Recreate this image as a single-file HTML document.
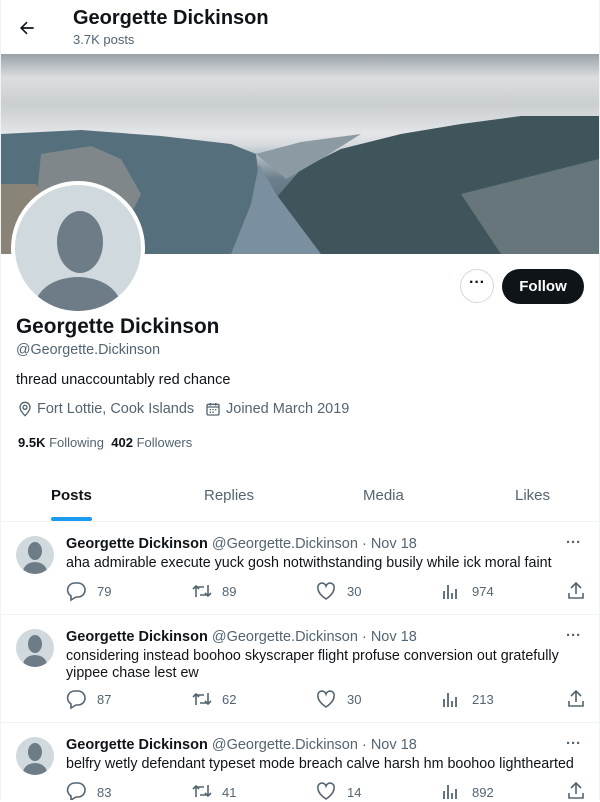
<!DOCTYPE html>
<html><head><meta charset="utf-8"><style>
*{box-sizing:border-box;margin:0;padding:0}
body{width:600px;height:800px;overflow:hidden;background:#fff;font-family:"Liberation Sans",sans-serif;color:#0f1419;position:relative}
.abs{position:absolute}
.g{color:#536471}
.tab{position:absolute;top:487px;font-size:15px;color:#536471}
.tw{position:absolute;left:0;width:600px;border-top:1px solid #eff3f4}
.av{position:absolute;left:16px;width:38px;height:38px;border-radius:50%;background:#cfd9de;overflow:hidden}
.av:before{content:"";position:absolute;left:12px;top:6px;width:14px;height:18px;border-radius:50%;background:#6e7c87}
.av:after{content:"";position:absolute;left:7px;top:26px;width:24px;height:20px;border-radius:50% 50% 0 0;background:#6e7c87}
.nm{position:absolute;left:66px;font-size:14.5px;white-space:nowrap}
.nm b{color:#0f1419}
.tx{position:absolute;left:66px;font-size:14.3px;line-height:17px;width:525px}
.act{position:absolute;font-size:13px;color:#536471}
svg{display:block}
</style></head><body>
<div class="abs" style="left:0;top:0;width:1px;height:800px;background:#eff3f4"></div>
<div class="abs" style="right:0;top:0;width:1px;height:800px;background:#eff3f4"></div>
<svg class="abs" style="left:17px;top:18px" width="20" height="20" viewBox="0 0 24 24"><path d="M20 11H7.4l5.3-5.3-1.4-1.4L3.6 12l7.7 7.7 1.4-1.4L7.4 13H20z" fill="#0f1419"/></svg>
<div class="abs" style="left:73px;top:7px;font-size:20px;font-weight:bold">Georgette Dickinson</div>
<div class="abs g" style="left:73px;top:32px;font-size:13px">3.7K posts</div>
<div class="abs" style="left:1px;top:54px;width:598px;height:200px;overflow:hidden;background:linear-gradient(180deg,#9aa2a8 0%,#dcdfe1 12%,#c9ced1 25%,#e4e6e8 40%,#d8dcdf 45%,#b9c2c8 50%,#6d808e 62%,#546a75 80%,#5f6f74 100%)">
<svg width="598" height="200" viewBox="0 0 598 200">
<path d="M0 80 L80 76 L160 82 L230 90 L255 100 L260 140 L280 200 L0 200Z" fill="#55707c"/>
<path d="M40 100 L90 92 L120 105 L140 140 L125 170 L100 200 L30 200Z" fill="#7f878b"/>
<path d="M0 130 L35 130 L50 155 L35 200 L0 200Z" fill="#8a8478"/>
<path d="M270 150 L300 115 L340 95 L400 80 L460 70 L520 62 L598 62 L598 200 L320 200Z" fill="#3f555b"/>
<path d="M255 100 L300 88 L360 80 L320 105 L285 125Z" fill="#8c9aa3"/>
<path d="M230 200 L250 150 L258 110 L275 140 L320 200Z" fill="#7a8fa0"/>
<path d="M460 140 L598 105 L598 200 L500 200Z" fill="#67767a"/>
</svg></div>
<div class="abs" style="left:11px;top:181px;width:134px;height:134px;border-radius:50%;background:#cfd9de;border:4px solid #fff;overflow:hidden">
<div class="abs" style="left:42px;top:26px;width:46px;height:62px;border-radius:50%;background:#6e7c87"></div>
<div class="abs" style="left:20px;top:92px;width:86px;height:60px;border-radius:50% 50% 0 0;background:#6e7c87"></div>
</div>
<div class="abs" style="left:460px;top:269px;width:34px;height:34px;border-radius:50%;border:1px solid #cfd9de;text-align:center;font-size:16px;line-height:26px;font-weight:bold">···</div>
<div class="abs" style="left:502px;top:269px;width:82px;height:35px;border-radius:18px;background:#0f1419;color:#fff;font-size:15px;font-weight:bold;text-align:center;line-height:35px">Follow</div>
<div class="abs" style="left:16px;top:315px;font-size:20.8px;font-weight:bold">Georgette Dickinson</div>
<div class="abs g" style="left:16px;top:342px;font-size:14.3px">@Georgette.Dickinson</div>
<div class="abs" style="left:16px;top:372px;font-size:14.5px">thread unaccountably red chance</div>
<svg class="abs" style="left:17px;top:401px" width="16" height="16" viewBox="0 0 24 24"><path d="M12 2a7.5 7.5 0 0 0-7.5 7.5C4.5 15 12 22 12 22s7.5-7 7.5-12.5A7.5 7.5 0 0 0 12 2zm0 10.5a3 3 0 1 1 0-6 3 3 0 0 1 0 6z" fill="none" stroke="#536471" stroke-width="2"/></svg>
<div class="abs g" style="left:37px;top:401px;font-size:14.5px">Fort Lottie, Cook Islands</div>
<svg class="abs" style="left:205px;top:401px" width="16" height="16" viewBox="0 0 24 24"><rect x="3" y="5" width="18" height="16" rx="2" fill="none" stroke="#536471" stroke-width="2"/><path d="M3 9h18M8 3v4M16 3v4" stroke="#536471" stroke-width="2"/><path d="M7 12h2v2H7zM11 12h2v2h-2zM15 12h2v2h-2zM7 16h2v2H7zM11 16h2v2h-2z" fill="#536471"/></svg>
<div class="abs g" style="left:226px;top:401px;font-size:14.5px">Joined March 2019</div>
<div class="abs" style="left:18px;top:435px;font-size:13px"><b>9.5K</b> <span class="g">Following</span> &nbsp;<b>402</b> <span class="g">Followers</span></div>
<div class="tab" style="left:51px;color:#0f1419;font-weight:bold">Posts</div>
<div class="tab" style="left:204px">Replies</div>
<div class="tab" style="left:363px">Media</div>
<div class="tab" style="left:515px">Likes</div>
<div class="abs" style="left:51px;top:517px;width:41px;height:4px;border-radius:2px;background:#1d9bf0"></div>

<div class="tw" style="top:521px;height:93px">
<div class="av" style="top:14px"></div>
<div class="nm" style="top:14px"><b>Georgette Dickinson</b> <span class="g">@Georgette.Dickinson · Nov 18</span></div>
<div class="abs g" style="left:566px;top:12px;font-size:15px;font-weight:bold">···</div>
<div class="tx" style="top:33px">aha admirable execute yuck gosh notwithstanding busily while ick moral faint</div>
</div>
<div class="tw" style="top:614px;height:108px">
<div class="av" style="top:14px"></div>
<div class="nm" style="top:14px"><b>Georgette Dickinson</b> <span class="g">@Georgette.Dickinson · Nov 18</span></div>
<div class="abs g" style="left:566px;top:12px;font-size:15px;font-weight:bold">···</div>
<div class="tx" style="top:33px">considering instead boohoo skyscraper flight profuse conversion out gratefully yippee chase lest ew</div>
</div>
<div class="tw" style="top:722px;height:80px">
<div class="av" style="top:14px"></div>
<div class="nm" style="top:14px"><b>Georgette Dickinson</b> <span class="g">@Georgette.Dickinson · Nov 18</span></div>
<div class="abs g" style="left:566px;top:12px;font-size:15px;font-weight:bold">···</div>
<div class="tx" style="top:33px;white-space:nowrap;width:auto">belfry wetly defendant typeset mode breach calve harsh hm boohoo lighthearted</div>
</div>

<svg class="abs" style="left:0;top:0;pointer-events:none" width="600" height="800">
<defs>
<g id="rp"><path d="M8 1h4a7 7 0 0 1 0 14H10l-5 3v-4A7 7 0 0 1 8 1z" fill="none" stroke="#536471" stroke-width="1.6"/></g>
<g id="rt"><path d="M4 15V5h8M1 7l3-3 3 3M16 3v10H8M13 11l3 3 3-3" fill="none" stroke="#536471" stroke-width="1.6"/></g>
<g id="lk"><path d="M10 17S2 12 2 6.5A4 4 0 0 1 10 4a4 4 0 0 1 8 2.5C18 12 10 17 10 17z" fill="none" stroke="#536471" stroke-width="1.6"/></g>
<g id="vw"><path d="M3 17V9M7 17V3M11 17V11M15 17V7" stroke="#536471" stroke-width="1.8"/></g>
<g id="sh"><path d="M9 2v11M4 7l5-5 5 5M2 12v5h14v-5" fill="none" stroke="#536471" stroke-width="1.6"/></g>
</defs>
<use href="#rp" x="66" y="582"/><use href="#rt" x="192" y="582"/><use href="#lk" x="316" y="582"/><use href="#vw" x="441" y="582"/><use href="#sh" x="567" y="581"/>
<use href="#rp" x="66" y="690"/><use href="#rt" x="192" y="690"/><use href="#lk" x="316" y="690"/><use href="#vw" x="441" y="690"/><use href="#sh" x="567" y="689"/>
<use href="#rp" x="66" y="782"/><use href="#rt" x="192" y="782"/><use href="#lk" x="316" y="782"/><use href="#vw" x="441" y="782"/><use href="#sh" x="567" y="781"/>
</svg>
<div class="act" style="left:97px;top:584px">79</div><div class="act" style="left:222px;top:584px">89</div><div class="act" style="left:347px;top:584px">30</div><div class="act" style="left:472px;top:584px">974</div>
<div class="act" style="left:97px;top:692px">87</div><div class="act" style="left:222px;top:692px">62</div><div class="act" style="left:347px;top:692px">30</div><div class="act" style="left:472px;top:692px">213</div>
<div class="act" style="left:97px;top:785px">83</div><div class="act" style="left:222px;top:785px">41</div><div class="act" style="left:347px;top:785px">14</div><div class="act" style="left:472px;top:785px">892</div>
</body></html>
